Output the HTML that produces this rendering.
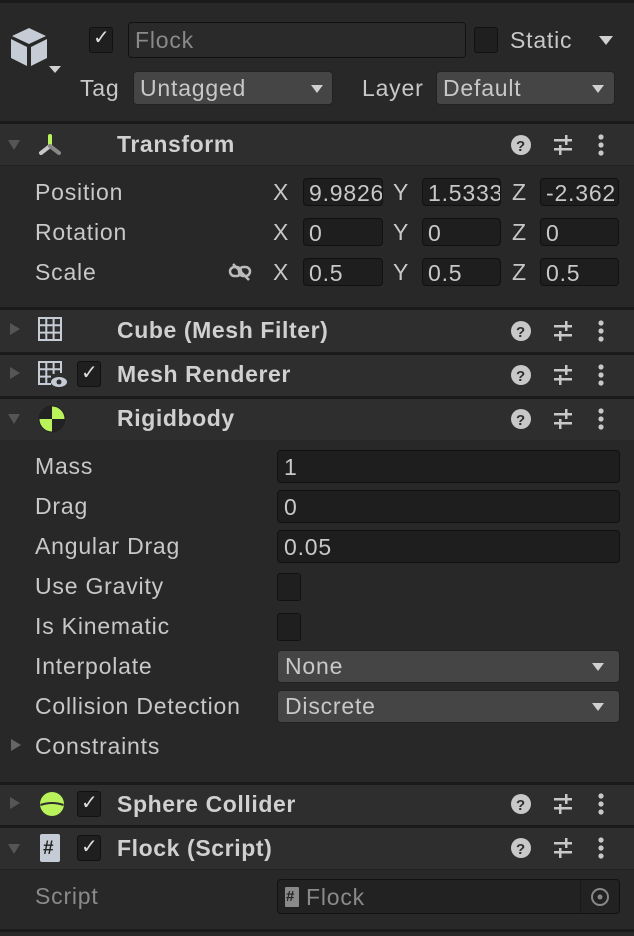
<!DOCTYPE html>
<html><head><meta charset="utf-8"><style>
*{margin:0;padding:0;box-sizing:border-box}
body{width:634px;height:936px;background:#282828;font-family:"Liberation Sans",sans-serif;color:#c8c8c8;font-size:23px;letter-spacing:0.8px;position:relative;overflow:hidden}
.a{position:absolute}
.t{position:absolute;line-height:1;white-space:nowrap}
.sep{position:absolute;left:0;width:634px;height:3px;background:#1a1a1a}
.hdr{position:absolute;left:0;width:634px;background:#2e2e2e}
.fld{position:absolute;background:#1e1e1e;border:1px solid #111;border-radius:4px;height:28px;overflow:hidden}
.dd{position:absolute;background:#454545;border:1px solid #222;border-radius:4px}
.cb{position:absolute;width:24px;height:26px;background:#1f1f1f;border:1px solid #111;border-radius:3px}
.b{font-weight:bold;color:#d0d0d0;letter-spacing:0.6px}
.tri{position:absolute;width:0;height:0}
</style></head><body>
<div class="sep" style="top:0;height:3px"></div>
<svg class="a" style="left:8px;top:26px" width="58" height="54" viewBox="0 0 58 54">
<polygon points="4,10 21,2 38,10 21,18" fill="#c6ccd6"/>
<polygon points="3,13 19,21 19,40 3,32" fill="#c6ccd6"/>
<polygon points="23,21 39,13 39,32 23,40" fill="#c6ccd6"/>
<polygon points="41,40 53,40 47,47" fill="#d0d0d0"/>
</svg>
<div class="cb" style="left:89px;top:27px"></div>
<div class="t" style="left:93px;top:28px;font-size:20px;color:#ddd">✓</div>
<div class="fld" style="left:128px;top:22px;width:338px;height:36px;background:#2a2a2a"></div>
<div class="t" style="left:135px;top:29px;color:#8a8a8a">Flock</div>
<div class="cb" style="left:474px;top:27px"></div>
<div class="t" style="left:510px;top:29px">Static</div>
<div class="tri" style="left:599px;top:36px;border-left:7px solid transparent;border-right:7px solid transparent;border-top:9px solid #d0d0d0"></div>
<div class="t" style="left:80px;top:77px">Tag</div>
<div class="dd" style="left:133px;top:71px;width:200px;height:34px"></div>
<div class="t" style="left:140px;top:77px">Untagged</div>
<div class="tri" style="left:311px;top:85px;border-left:6px solid transparent;border-right:6px solid transparent;border-top:8px solid #d0d0d0"></div>
<div class="t" style="left:362px;top:77px">Layer</div>
<div class="dd" style="left:436px;top:71px;width:179px;height:34px"></div>
<div class="t" style="left:443px;top:77px">Default</div>
<div class="tri" style="left:592px;top:85px;border-left:6px solid transparent;border-right:6px solid transparent;border-top:8px solid #d0d0d0"></div>

<div class="sep" style="top:121px"></div>
<div class="hdr" style="top:124px;height:41px"></div>
<div class="tri" style="left:8px;top:140px;border-left:6px solid transparent;border-right:6px solid transparent;border-top:10px solid #555"></div>
<svg class="a" style="left:36px;top:132px" width="30" height="26"><rect x="12" y="2" width="4" height="12" rx="2" fill="#b9f25a"/><path d="M14 14 L5 21" stroke="#c8c8c8" stroke-width="4" stroke-linecap="round"/><path d="M14 14 L23 21" stroke="#888" stroke-width="4" stroke-linecap="round"/></svg>
<div class="t b" style="left:117px;top:133px">Transform</div>
<div class="sep" style="top:165px;height:1px;background:#222"></div>

<div class="t" style="left:35px;top:181px">Position</div>
<div class="t" style="left:35px;top:221px">Rotation</div>
<div class="t" style="left:35px;top:261px">Scale</div>
<svg class="a" style="left:228px;top:262px" width="26" height="20"><g fill="none" stroke="#bbb" stroke-width="2.5"><rect x="2" y="5" width="11" height="9" rx="4.5"/><rect x="11" y="5" width="11" height="9" rx="4.5"/><line x1="5" y1="2" x2="21" y2="18"/></g></svg>

<div class="t" style="left:273px;top:181px">X</div><div class="t" style="left:393px;top:181px">Y</div><div class="t" style="left:512px;top:181px">Z</div>
<div class="t" style="left:273px;top:221px">X</div><div class="t" style="left:393px;top:221px">Y</div><div class="t" style="left:512px;top:221px">Z</div>
<div class="t" style="left:273px;top:261px">X</div><div class="t" style="left:393px;top:261px">Y</div><div class="t" style="left:512px;top:261px">Z</div>

<div class="fld" style="left:303px;top:178px;width:80px"><span class="t" style="left:5px;top:3px">9.9826</span></div>
<div class="fld" style="left:422px;top:178px;width:79px"><span class="t" style="left:5px;top:3px">1.5333</span></div>
<div class="fld" style="left:540px;top:178px;width:79px"><span class="t" style="left:5px;top:3px">-2.362</span></div>
<div class="fld" style="left:303px;top:218px;width:80px"><span class="t" style="left:5px;top:3px">0</span></div>
<div class="fld" style="left:422px;top:218px;width:79px"><span class="t" style="left:5px;top:3px">0</span></div>
<div class="fld" style="left:540px;top:218px;width:79px"><span class="t" style="left:5px;top:3px">0</span></div>
<div class="fld" style="left:303px;top:258px;width:80px"><span class="t" style="left:5px;top:3px">0.5</span></div>
<div class="fld" style="left:422px;top:258px;width:79px"><span class="t" style="left:5px;top:3px">0.5</span></div>
<div class="fld" style="left:540px;top:258px;width:79px"><span class="t" style="left:5px;top:3px">0.5</span></div>

<div class="sep" style="top:307px"></div>
<div class="hdr" style="top:310px;height:42px"></div>
<div class="tri" style="left:10px;top:323px;border-top:6px solid transparent;border-bottom:6px solid transparent;border-left:10px solid #555"></div>
<svg class="a" style="left:38px;top:317px" width="26" height="26"><g fill="none" stroke="#c6ccd6" stroke-width="2"><rect x="1" y="1" width="22" height="22"/><line x1="8.3" y1="1" x2="8.3" y2="23"/><line x1="15.6" y1="1" x2="15.6" y2="23"/><line x1="1" y1="8.3" x2="23" y2="8.3"/><line x1="1" y1="15.6" x2="23" y2="15.6"/></g></svg>
<div class="t b" style="left:117px;top:319px">Cube (Mesh Filter)</div>

<div class="sep" style="top:352px"></div>
<div class="hdr" style="top:355px;height:41px"></div>
<div class="tri" style="left:10px;top:367px;border-top:6px solid transparent;border-bottom:6px solid transparent;border-left:10px solid #555"></div>
<svg class="a" style="left:38px;top:361px" width="30" height="28"><g fill="none" stroke="#c6ccd6" stroke-width="2"><path d="M13 23 H1 V1 H23 V12"/><line x1="8.3" y1="1" x2="8.3" y2="23"/><line x1="15.6" y1="1" x2="15.6" y2="13"/><line x1="1" y1="8.3" x2="23" y2="8.3"/><line x1="1" y1="15.6" x2="13" y2="15.6"/></g><ellipse cx="21" cy="21" rx="8" ry="5" fill="#c6ccd6"/><circle cx="21" cy="21" r="2.5" fill="#2e2e2e"/></svg>
<div class="cb" style="left:77px;top:361px"></div><div class="t" style="left:81px;top:363px;font-size:20px;color:#ddd">✓</div>
<div class="t b" style="left:117px;top:363px">Mesh Renderer</div>

<div class="sep" style="top:396px"></div>
<div class="hdr" style="top:399px;height:41px"></div>
<div class="tri" style="left:8px;top:414px;border-left:6px solid transparent;border-right:6px solid transparent;border-top:10px solid #555"></div>
<svg class="a" style="left:37px;top:404px" width="30" height="30"><circle cx="15" cy="15" r="13" fill="#b9f25a" stroke="#222" stroke-width="1"/><path d="M15 2 V15 H2 A13 13 0 0 1 15 2Z" fill="#222"/><path d="M15 15 H28 A13 13 0 0 1 15 28Z" fill="#222"/></svg>
<div class="t b" style="left:117px;top:407px">Rigidbody</div>

<div class="t" style="left:35px;top:455px">Mass</div>
<div class="t" style="left:35px;top:495px">Drag</div>
<div class="t" style="left:35px;top:535px">Angular Drag</div>
<div class="t" style="left:35px;top:575px">Use Gravity</div>
<div class="t" style="left:35px;top:615px">Is Kinematic</div>
<div class="t" style="left:35px;top:655px">Interpolate</div>
<div class="t" style="left:35px;top:695px">Collision Detection</div>
<div class="tri" style="left:11px;top:739px;border-top:6px solid transparent;border-bottom:6px solid transparent;border-left:10px solid #666"></div>
<div class="t" style="left:35px;top:735px">Constraints</div>

<div class="fld" style="left:277px;top:450px;width:343px;height:33px"><span class="t" style="left:6px;top:5px">1</span></div>
<div class="fld" style="left:277px;top:490px;width:343px;height:33px"><span class="t" style="left:6px;top:5px">0</span></div>
<div class="fld" style="left:277px;top:530px;width:343px;height:33px"><span class="t" style="left:6px;top:5px">0.05</span></div>
<div class="cb" style="left:277px;top:573px;height:28px"></div>
<div class="cb" style="left:277px;top:613px;height:28px"></div>
<div class="dd" style="left:277px;top:650px;width:343px;height:33px"></div>
<div class="t" style="left:285px;top:655px">None</div>
<div class="tri" style="left:592px;top:663px;border-left:6px solid transparent;border-right:6px solid transparent;border-top:8px solid #d0d0d0"></div>
<div class="dd" style="left:277px;top:690px;width:343px;height:33px"></div>
<div class="t" style="left:285px;top:695px">Discrete</div>
<div class="tri" style="left:592px;top:703px;border-left:6px solid transparent;border-right:6px solid transparent;border-top:8px solid #d0d0d0"></div>

<div class="sep" style="top:782px"></div>
<div class="hdr" style="top:785px;height:40px"></div>
<div class="tri" style="left:10px;top:797px;border-top:6px solid transparent;border-bottom:6px solid transparent;border-left:10px solid #555"></div>
<svg class="a" style="left:39px;top:791px" width="26" height="26"><circle cx="13" cy="13" r="12" fill="#b9f25a"/><path d="M1.5 14 Q13 10 24.5 14" stroke="#2e2e2e" stroke-width="2" fill="none"/></svg>
<div class="cb" style="left:77px;top:791px"></div><div class="t" style="left:81px;top:793px;font-size:20px;color:#ddd">✓</div>
<div class="t b" style="left:117px;top:793px">Sphere Collider</div>

<div class="sep" style="top:825px"></div>
<div class="hdr" style="top:828px;height:41px"></div>
<div class="tri" style="left:8px;top:844px;border-left:6px solid transparent;border-right:6px solid transparent;border-top:10px solid #555"></div>
<div class="a" style="left:40px;top:834px;width:20px;height:28px;background:#c6ccd6;border-radius:2px"></div>
<div class="t" style="left:43px;top:839px;font-size:19px;color:#222;font-weight:bold;letter-spacing:0">#</div>
<div class="cb" style="left:77px;top:835px"></div><div class="t" style="left:81px;top:837px;font-size:20px;color:#ddd">✓</div>
<div class="t b" style="left:117px;top:837px">Flock (Script)</div>
<div class="sep" style="top:869px;height:1px;background:#222"></div>

<div class="t" style="left:35px;top:885px;color:#8a8a8a">Script</div>
<div class="fld" style="left:277px;top:879px;width:343px;height:35px;background:#222"></div>
<div class="a" style="left:580px;top:880px;width:1px;height:33px;background:#1a1a1a"></div>
<div class="a" style="left:285px;top:887px;width:14px;height:20px;background:#8a8a8a;border-radius:1px"></div>
<div class="t" style="left:286px;top:889px;font-size:15px;color:#222;font-weight:bold;letter-spacing:0">#</div>
<div class="t" style="left:306px;top:886px;color:#8a8a8a">Flock</div>
<svg class="a" style="left:590px;top:887px" width="20" height="20"><circle cx="10" cy="10" r="8" fill="none" stroke="#888" stroke-width="2"/><circle cx="10" cy="10" r="2.5" fill="#888"/></svg>
<div class="sep" style="top:929px"></div>

<svg class="a" style="left:508px;top:132px" width="110" height="30" viewBox="0 0 110 30">
<defs><g id="ic">
<circle cx="13" cy="12" r="10" fill="#c8c8c8"/>
<text x="13" y="18" font-family="Liberation Sans" font-weight="bold" font-size="15" text-anchor="middle" fill="#2e2e2e">?</text>
<g fill="#c8c8c8"><rect x="46" y="6" width="18" height="2.5"/><rect x="46" y="15" width="18" height="2.5"/><rect x="57" y="2" width="2.5" height="10"/><rect x="51" y="12" width="2.5" height="10"/></g>
<circle cx="93" cy="4" r="2.6" fill="#c8c8c8"/><circle cx="93" cy="12" r="2.6" fill="#c8c8c8"/><circle cx="93" cy="20" r="2.6" fill="#c8c8c8"/>
</g></defs>
</svg>
<svg class="a" style="left:508px;top:133px" width="110" height="26"><use href="#ic"/></svg>
<svg class="a" style="left:508px;top:319px" width="110" height="26"><use href="#ic"/></svg>
<svg class="a" style="left:508px;top:363px" width="110" height="26"><use href="#ic"/></svg>
<svg class="a" style="left:508px;top:407px" width="110" height="26"><use href="#ic"/></svg>
<svg class="a" style="left:508px;top:792px" width="110" height="26"><use href="#ic"/></svg>
<svg class="a" style="left:508px;top:836px" width="110" height="26"><use href="#ic"/></svg>
</body></html>
